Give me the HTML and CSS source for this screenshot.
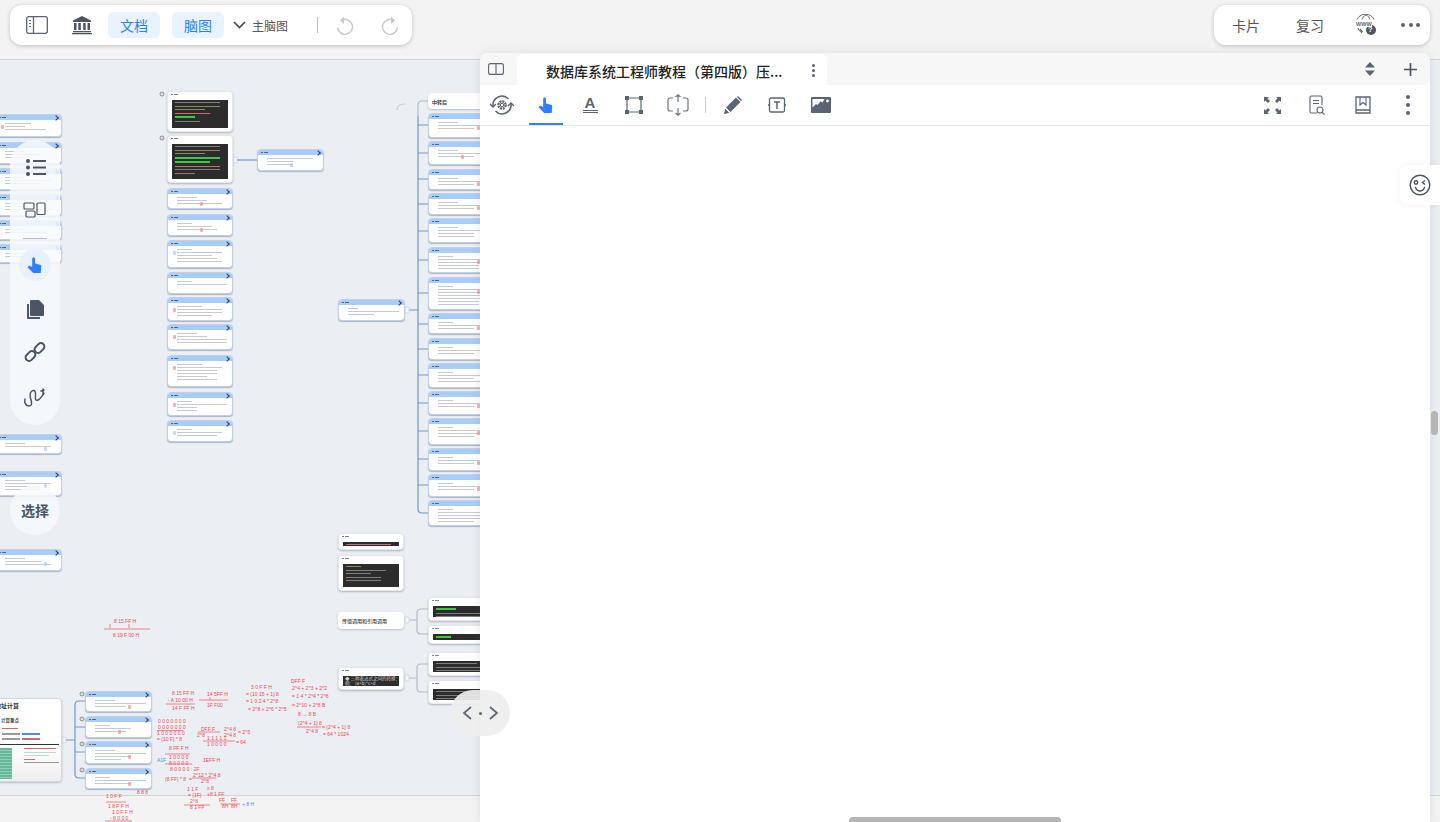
FILE: index.html
```html
<!DOCTYPE html>
<html lang="zh-CN">
<head>
<meta charset="utf-8">
<title>脑图</title>
<link rel="stylesheet" href="styles.css">
</head>
<body>
<main class="stage">

<section class="canvas">
  <div class="sheet"></div>

  <svg class="wires" viewBox="0 0 1440 822" aria-hidden="true">
    <g class="wire-blue">
      <path d="M233 160H257"/>
      <path d="M405 310H418M418 116V509Q418 513 422 513H428"/>
      <path d="M418 125H428M418 153H428M418 179H428M418 204H428M418 231H428M418 260H428M418 293H428M418 324H428M418 349H428M418 375H428M418 403H428M418 431H428M418 459H428M418 485H428"/>
      <path d="M62 740H75M85 701H79Q75 701 75 705V774Q75 778 79 778H85M75 727H85M75 752H85"/>
    </g>
    <g class="wire-grey">
      <path d="M418 116V105Q418 101 422 101H428"/>
      <path d="M405 620H417M428 609H421Q417 609 417 613V630Q417 634 421 634H428"/>
      <path d="M405 678H417M428 664H421Q417 664 417 668V688Q417 692 421 692H428"/>
    </g>
    <path class="wire-arc" d="M397 110Q397 104 405 104"/>
    <g class="knob">
      <rect x="405" y="307" width="4" height="6" rx="1"/>
      <rect x="233" y="157" width="4" height="6" rx="1"/>
      <rect x="62" y="737" width="4" height="6" rx="1"/>
      <rect x="405" y="617" width="4" height="6" rx="1"/>
      <rect x="405" y="675" width="4" height="6" rx="1"/>
    </g>
    <g class="gear">
      <circle cx="162" cy="94" r="2"/><circle cx="162" cy="138" r="2"/>
      <circle cx="82" cy="694" r="2"/><circle cx="82" cy="719" r="2"/><circle cx="82" cy="744" r="2"/><circle cx="82" cy="770" r="2"/>
    </g>
  </svg>

  <!-- left column -->
  <div class="node" style="left:-5px;top:114px;width:67px;height:23px"><span class="ln w50"></span><span class="ln w40"></span><span class="ln w80"></span><i class="mark red m1"></i></div>
  <div class="node" style="left:-5px;top:142px;width:67px;height:22px"><span class="ln w40"></span><span class="ln w70"></span><span class="ln w50"></span></div>
  <div class="node" style="left:-5px;top:168px;width:67px;height:22px"><span class="ln w40"></span><span class="ln w90"></span><span class="ln w70"></span></div>
  <div class="node" style="left:-5px;top:194px;width:67px;height:22px"><span class="ln w40"></span><span class="ln w50"></span><span class="ln w90"></span></div>
  <div class="node" style="left:-5px;top:220px;width:67px;height:20px"><span class="ln w40"></span><span class="ln w80"></span></div>
  <div class="node" style="left:-5px;top:244px;width:67px;height:19px"><span class="ln w50"></span><span class="ln w70"></span></div>
  <div class="node" style="left:-5px;top:434px;width:67px;height:20px"><span class="ln w40"></span><span class="ln w90"></span><i class="mark blue m3"></i></div>
  <div class="node" style="left:-5px;top:471px;width:67px;height:25px"><span class="ln w40"></span><span class="ln w90"></span><span class="ln w70"></span><span class="ln w70"></span><i class="mark blue m3"></i></div>
  <div class="node" style="left:-5px;top:549px;width:67px;height:22px"><span class="ln w40"></span><span class="ln w70"></span><span class="ln w90"></span><i class="mark blue m3"></i></div>

  <!-- second column -->
  <div class="node plain" style="left:167px;top:91px;width:66px;height:41px">
    <div class="shot"><span class="ln c-w w90"></span><span class="ln c-y w90"></span><span class="ln c-y w60"></span><span class="ln c-r w70"></span><span class="ln c-g w40"></span><span class="ln c-w w50"></span></div>
  </div>
  <div class="node plain" style="left:167px;top:135px;width:66px;height:48px">
    <div class="shot"><span class="ln c-w w90"></span><span class="ln c-y w90"></span><span class="ln c-y w60"></span><span class="ln c-g w90"></span><span class="ln c-g w70"></span><span class="ln c-r w90"></span><span class="ln c-w w90"></span><span class="ln c-w w40"></span></div>
  </div>
  <div class="node" style="left:167px;top:188px;width:66px;height:21px"><span class="ln w40"></span><span class="ln w60"></span><span class="ln w90"></span><i class="mark red m2"></i></div>
  <div class="node" style="left:167px;top:214px;width:66px;height:22px"><span class="ln w30"></span><span class="ln w70"></span><span class="ln w80"></span><i class="mark red m2"></i></div>
  <div class="node" style="left:167px;top:240px;width:66px;height:28px"><span class="ln w30"></span><span class="ln w90"></span><span class="ln w70"></span><span class="ln w80"></span><span class="ln w90"></span><i class="mark blue m1"></i></div>
  <div class="node" style="left:167px;top:272px;width:66px;height:22px"><span class="ln w30"></span><span class="ln w100"></span></div>
  <div class="node" style="left:167px;top:297px;width:66px;height:24px"><span class="ln w50"></span><span class="ln w90"></span><span class="ln w90"></span><span class="ln w70"></span><i class="mark red m1"></i></div>
  <div class="node" style="left:167px;top:324px;width:66px;height:26px"><span class="ln w40"></span><span class="ln w60"></span><span class="ln w100"></span><span class="ln w100"></span><i class="mark red m1"></i></div>
  <div class="node" style="left:167px;top:355px;width:66px;height:32px"><span class="ln w50"></span><span class="ln w90"></span><span class="ln w80"></span><span class="ln w80"></span><span class="ln w60"></span><span class="ln w80"></span><i class="mark red m1"></i></div>
  <div class="node" style="left:167px;top:392px;width:66px;height:24px"><span class="ln w30"></span><span class="ln w100"></span><span class="ln w40"></span><span class="ln w40"></span><i class="mark red m1"></i></div>
  <div class="node" style="left:167px;top:420px;width:66px;height:22px"><span class="ln w30"></span><span class="ln w90"></span><span class="ln w80"></span><i class="mark blue m1"></i></div>

  <!-- third column -->
  <div class="node" style="left:257px;top:149px;width:67px;height:22px"><span class="ln w90"></span><span class="ln w50"></span><span class="ln w50"></span><i class="mark blue m2"></i></div>
  <div class="node" style="left:338px;top:299px;width:67px;height:22px"><span class="ln w20"></span><span class="ln w100"></span><span class="ln w50"></span></div>
  <div class="node plain" style="left:338px;top:533px;width:66px;height:17px"><div class="shot"><span class="ln c-r w90"></span></div></div>
  <div class="node plain" style="left:338px;top:555px;width:66px;height:36px"><div class="shot"><span class="ln c-y w30"></span><span class="ln c-w w80"></span><span class="ln c-w w50"></span><span class="ln c-w w70"></span><span class="ln c-w w70"></span></div></div>
  <div class="title-node" style="left:338px;top:612px;width:66px;height:17px">传值调用和引用调用</div>
  <div class="node plain" style="left:338px;top:667px;width:66px;height:23px"><div class="shot shot-text">◆ 三种表达式之间的转换：<br>例： (a+b)*c+d</div></div>

  <!-- right trunk -->
  <div class="title-node strong" style="left:428px;top:93px;width:67px;height:16px">中转后</div>
  <div class="node" style="left:428px;top:113px;width:67px;height:25px"><span class="ln w40"></span><span class="ln w90"></span><span class="ln w70"></span><i class="mark red m3"></i></div>
  <div class="node" style="left:428px;top:141px;width:67px;height:24px"><span class="ln w40"></span><span class="ln w90"></span><span class="ln w70"></span><i class="mark red m2"></i></div>
  <div class="node" style="left:428px;top:169px;width:67px;height:21px"><span class="ln w40"></span><span class="ln w90"></span><span class="ln w70"></span><i class="mark red m3"></i></div>
  <div class="node" style="left:428px;top:193px;width:67px;height:22px"><span class="ln w40"></span><span class="ln w90"></span><span class="ln w70"></span><i class="mark red m3"></i></div>
  <div class="node" style="left:428px;top:218px;width:67px;height:25px"><span class="ln w40"></span><span class="ln w90"></span><span class="ln w70"></span><span class="ln w70"></span></div>
  <div class="node" style="left:428px;top:247px;width:67px;height:26px"><span class="ln w30"></span><span class="ln w100"></span><span class="ln w80"></span><span class="ln w80"></span><span class="ln w80"></span><i class="mark red m3"></i></div>
  <div class="node" style="left:428px;top:277px;width:67px;height:33px"><span class="ln w30"></span><span class="ln w90"></span><span class="ln w100"></span><span class="ln w90"></span><span class="ln w90"></span><span class="ln w80"></span><span class="ln w80"></span><i class="mark red m3"></i></div>
  <div class="node" style="left:428px;top:313px;width:67px;height:21px"><span class="ln w30"></span><span class="ln w100"></span><span class="ln w70"></span><i class="mark red m3"></i></div>
  <div class="node" style="left:428px;top:338px;width:67px;height:22px"><span class="ln w30"></span><span class="ln w100"></span><span class="ln w70"></span></div>
  <div class="node" style="left:428px;top:363px;width:67px;height:25px"><span class="ln w30"></span><span class="ln w100"></span><span class="ln w70"></span><span class="ln w90"></span></div>
  <div class="node" style="left:428px;top:391px;width:67px;height:24px"><span class="ln w30"></span><span class="ln w100"></span><span class="ln w70"></span><i class="mark red m3"></i></div>
  <div class="node" style="left:428px;top:418px;width:67px;height:27px"><span class="ln w30"></span><span class="ln w100"></span><span class="ln w90"></span><span class="ln w70"></span><i class="mark red m3"></i></div>
  <div class="node" style="left:428px;top:448px;width:67px;height:23px"><span class="ln w30"></span><span class="ln w100"></span><span class="ln w70"></span><i class="mark red m3"></i></div>
  <div class="node" style="left:428px;top:474px;width:67px;height:23px"><span class="ln w30"></span><span class="ln w100"></span><span class="ln w70"></span><i class="mark red m3"></i></div>
  <div class="node" style="left:428px;top:500px;width:67px;height:26px"><span class="ln w30"></span><span class="ln w100"></span><span class="ln w90"></span><span class="ln w90"></span><span class="ln w70"></span></div>

  <div class="node plain" style="left:428px;top:597px;width:67px;height:24px"><div class="shot"><span class="ln c-g w40"></span><span class="ln c-w w100"></span><span class="ln c-w w100"></span></div></div>
  <div class="node plain" style="left:428px;top:625px;width:67px;height:19px"><div class="shot"><span class="ln c-g w30"></span><span class="ln c-w w100"></span></div></div>
  <div class="node plain" style="left:428px;top:652px;width:67px;height:24px"><div class="shot"><span class="ln c-w w80"></span><span class="ln c-w w100"></span><span class="ln c-w w100"></span></div></div>
  <div class="node plain" style="left:428px;top:680px;width:67px;height:24px"><div class="shot"><span class="ln c-w w80"></span><span class="ln c-w w100"></span><span class="ln c-w w100"></span></div></div>

  <!-- bottom-left group -->
  <div class="big-node">
    <h2 class="big-title">地址计算</h2>
    <h3 class="big-sub">计算重点</h3>
    <div class="big-row"><span class="ln c-r seg-a"></span></div>
    <div class="big-row"><span class="ln c-n seg-b"></span><span class="ln c-b seg-c"></span></div>
    <div class="big-row"><span class="ln c-n seg-b"></span><span class="ln c-r seg-c"></span></div>
    <span class="ln c-k w100"></span>
    <div class="big-figure">
      <div class="table"></div>
      <div class="notes"><span class="ln c-r w90"></span><span class="ln c-l w90"></span><span class="ln c-l w70"></span><span class="ln c-r w30"></span><span class="ln c-n w100"></span></div>
    </div>
  </div>
  <div class="node" style="left:85px;top:691px;width:67px;height:21px"><span class="ln w40"></span><span class="ln w100"></span><span class="ln w60"></span><i class="mark red m4"></i></div>
  <div class="node" style="left:85px;top:716px;width:67px;height:22px"><span class="ln w30"></span><span class="ln w70"></span><span class="ln w60"></span><i class="mark red m2"></i></div>
  <div class="node" style="left:85px;top:741px;width:67px;height:23px"><span class="ln w40"></span><span class="ln w100"></span><span class="ln w70"></span><span class="ln w50"></span><i class="mark red m4"></i></div>
  <div class="node" style="left:85px;top:768px;width:67px;height:21px"><span class="ln w30"></span><span class="ln w100"></span><span class="ln w70"></span><i class="mark red m4"></i></div>

  <svg class="ink" viewBox="0 0 1440 822" aria-hidden="true">
    <g class="ink-lines">
      <path d="M104 629H150M110 624V628M129 624V628"/>
      <path d="M166 704H195M199 700H228M210 697V700"/>
      <path d="M157 730.500H183M198 732H220M203 741H235M165 754H190M165 764H192"/>
      <path d="M192 778H216M297 727H321M184 805H210M106 802H126M105 821H132"/>
      <path d="M220 804H240"/>
    </g>
    <g class="ink-text">
      <text x="114" y="623">8 15 FF H</text>
      <text x="113" y="637">8 19 F 00 H</text>
      <text x="172" y="695">8 15 FF H</text>
      <text x="168" y="702">- A 10 00 H</text>
      <text x="172" y="710">14 F FF H</text>
      <text x="207" y="696">14 5FF H</text>
      <text x="207" y="707">1F F00</text>
      <text x="251" y="689">3 0 F F H</text>
      <text x="246" y="696">= (10 15 + 1) 8</text>
      <text x="246" y="703">= 1 0 2 4 * 2^8</text>
      <text x="248" y="711">= 2^8 + 2^6 * 2^5</text>
      <text x="291" y="683">DFF F</text>
      <text x="292" y="690">2^4 + 2^3 + 2^2</text>
      <text x="292" y="698">= 1 4 * 2^4 * 2^8</text>
      <text x="292" y="707">= 2^10 + 2^8 B</text>
      <text x="298" y="716">8 → 8 B</text>
      <text x="298" y="725">(2^4 + 1) 8</text>
      <text x="306" y="733">2^4 8</text>
      <text x="322" y="729">= (2^4 + 1) 8</text>
      <text x="323" y="736">= 64 * 1024</text>
      <text x="158" y="723">0 0 0 0 0 0 0</text>
      <text x="158" y="729">0 0 0 0 0 0 0</text>
      <text x="157" y="735">1 0 0 0 0 0 0</text>
      <text x="157" y="741">= (10 F) * 8</text>
      <text x="169" y="750">8 FF F H</text>
      <text x="169" y="759">1 0 0 0 0</text>
      <text x="169" y="765">8 0 0 0 0</text>
      <text x="170" y="771">8 0 0 0 0 : 2F</text>
      <text x="201" y="731">DFF F</text>
      <text x="197" y="737">2^8</text>
      <text x="224" y="731">2^4 8</text>
      <text x="224" y="737">2^4 8</text>
      <text x="238" y="734">= 2^5</text>
      <text x="207" y="740">1 1 1 1 1</text>
      <text x="207" y="746">1 0 0 0 0</text>
      <text x="236" y="744">= 64</text>
      <text x="203" y="762">1EFF H</text>
      <text x="165" y="781">(8 FF) * 8</text>
      <text x="189" y="781">=</text>
      <text x="193" y="777">2^12 * 2^4 8</text>
      <text x="201" y="783">2^8</text>
      <text x="187" y="791">1 1 F</text>
      <text x="188" y="797">= (1F)</text>
      <text x="207" y="790">x 8</text>
      <text x="207" y="796">+8 1 FF</text>
      <text x="190" y="803">2^8</text>
      <text x="190" y="809">8 1 FF</text>
      <text x="219" y="802">FF</text>
      <text x="231" y="802">FF</text>
      <text x="222" y="808">8H</text>
      <text x="231" y="808">8H</text>
      <text x="137" y="794">8 8 8</text>
      <text x="106" y="798">1 0 F F</text>
      <text x="108" y="808">1 8 F F H</text>
      <text x="112" y="814">1 0 F F H</text>
      <text x="110" y="820">- 8 0 0 0</text>
      <text class="ink-blue" x="157" y="762">A1F</text>
      <text class="ink-blue" x="242" y="806">+ 8 H</text>
    </g>
  </svg>
</section>

<!-- floating tool rail -->
<aside class="rail">
  <button class="rail-btn"><svg viewBox="0 0 24 24" width="24" height="24"><g fill="#4b5563"><circle cx="5" cy="6" r="2"/><circle cx="5" cy="12.5" r="2"/><circle cx="5" cy="19" r="2"/><rect x="10" y="5" width="13" height="2"/><rect x="10" y="11.500" width="13" height="2"/><rect x="10" y="18" width="13" height="2"/></g></svg></button>
  <button class="rail-btn"><svg viewBox="0 0 24 24" width="24" height="24" fill="none" stroke="#4b5563" stroke-width="1.2"><rect x="1" y="4" width="10" height="6" rx="1"/><rect x="3" y="12" width="9" height="6" rx="1"/><rect x="14" y="4" width="8" height="11.500" rx="1"/></svg></button>
  <div class="rail-rule"></div>
  <button class="rail-btn on"><svg viewBox="0 0 20 20" width="19" height="19"><path fill="#2f80ff" d="M8 1.500c.9 0 1.500.6 1.500 1.500v5l5.200 1.200c.9.2 1.500 1 1.400 2l-.6 6.800H7.500L1.600 11.800l1-1c.5-.5 1.300-.6 1.900-.2l2 1.300V3c0-.9.6-1.500 1.500-1.500z"/></svg></button>
  <button class="rail-btn"><svg viewBox="0 0 24 24" width="24" height="24"><path fill="#4b5563" d="M8 3h8l5 5v10a1 1 0 0 1-1 1H8a1 1 0 0 1-1-1V4a1 1 0 0 1 1-1zM4 7h2v13h11v2H5a1 1 0 0 1-1-1z"/></svg></button>
  <button class="rail-btn"><svg viewBox="0 0 24 24" width="24" height="24" fill="none" stroke="#4b5563" stroke-width="2"><rect x="2" y="12.500" width="11" height="7" rx="3.500" transform="rotate(-45 7.500 16)"/><rect x="11" y="4.500" width="11" height="7" rx="3.500" transform="rotate(-45 16.500 8)"/></svg></button>
  <button class="rail-btn"><svg viewBox="0 0 24 24" width="24" height="24" fill="none" stroke="#4b5563" stroke-width="1.500" stroke-linecap="round"><path d="M2 15c-1 4 1 7 4 7s3-3 2-6-2-7 1-9 4 2 3.500 5 0 5 2.500 4 4-4 6-7"/><path d="M20 5v5M18 7l3-1"/></svg></button>
</aside>
<button class="rail-select">选择</button>

<!-- top-left toolbar -->
<header class="bar bar-left">
  <svg class="ic i-side" viewBox="0 0 22 18" width="22" height="18" fill="none" stroke="#5b6472" stroke-width="1.300"><rect x=".7" y=".7" width="20.600" height="16.600" rx="2"/><path d="M7.500 1v16"/><path d="M3 4.500h2M3 7.500h2M3 10.500h2" stroke-width="1.100"/></svg>
  <svg class="ic i-bank" viewBox="0 0 20 20" width="20" height="20" fill="#4b5563"><path d="M10 1 1 5.500V7h18V5.500z"/><rect x="2" y="8" width="2.500" height="7"/><rect x="6.300" y="8" width="2.500" height="7"/><rect x="11.200" y="8" width="2.500" height="7"/><rect x="15.500" y="8" width="2.500" height="7"/><rect x="1" y="16" width="18" height="1.300"/><rect x="0" y="18" width="20" height="1.300"/></svg>
  <a class="pill p-doc">文档</a>
  <a class="pill p-map">脑图</a>
  <svg class="ic i-chev" viewBox="0 0 13 8" width="13" height="8" fill="none" stroke="#3d4654" stroke-width="1.600"><path d="M1 1l5.500 5.500L12 1"/></svg>
  <span class="map-name">主脑图</span>
  <i class="bar-sep"></i>
  <svg class="ic i-undo" viewBox="0 0 18 20" width="18" height="20" fill="none" stroke="#c6c8cb" stroke-width="1.500"><path d="M5 5.500a7.500 7.500 0 1 1-3.500 7"/><path d="M8 1.500 4 5.500l4 3.500" fill="#c6c8cb" stroke="none"/></svg>
  <svg class="ic i-redo" viewBox="0 0 18 20" width="18" height="20" fill="none" stroke="#c6c8cb" stroke-width="1.500"><path d="M13 5.500a7.500 7.500 0 1 0 3.500 7"/><path d="M10 1.500l4 4-4 3.500" fill="#c6c8cb" stroke="none"/></svg>
</header>

<!-- top-right toolbar -->
<header class="bar bar-right">
  <a class="bar-link">卡片</a>
  <a class="bar-link">复习</a>
  <span class="www">
    <svg viewBox="0 0 22 22" width="22" height="22" fill="none" stroke="#5b6472" stroke-width="1"><path d="M2 5.500A9.500 9.500 0 0 1 19 5.500M11 .8c-2 1-3.500 3-4 4.700M11 .8c2 1 3.500 3 4 4.700M3 14a9.500 9.500 0 0 0 4 5"/><path d="m5 15 2.500 3" stroke-width="1.400"/><circle cx="16" cy="16" r="5" fill="#4b5563" stroke="none"/></svg>
    <b class="www-w">WWW</b><b class="www-q">?</b>
  </span>
  <span class="dots"><i></i><i></i><i></i></span>
</header>

<!-- reader window -->
<section class="reader">
  <div class="tabs">
    <span class="tabs-side"><svg viewBox="0 0 16 12" width="16" height="12" fill="none" stroke="#5b6472" stroke-width="1.100"><rect x=".6" y=".6" width="14.800" height="10.800" rx="2"/><path d="M8 1v10"/></svg></span>
    <div class="tab">
      <span class="tab-title">数据库系统工程师教程（第四版）压...</span>
      <span class="kebab small"><i></i><i></i><i></i></span>
    </div>
    <svg class="ic i-sort" viewBox="0 0 10 14" width="10" height="14" fill="#5b6472"><path d="M5 0l5 5.500H0zM5 14 0 8.500h10z"/></svg>
    <svg class="ic i-plus" viewBox="0 0 13 13" width="13" height="13" stroke="#4b5563" stroke-width="1.700"><path d="M6.500 0v13M0 6.500h13"/></svg>
  </div>
  <div class="tools">
    <span class="tool"><svg viewBox="0 0 24 24" width="24" height="24" fill="none" stroke="#5b6472" stroke-width="1.500"><path d="M3 13a9 9 0 0 1 15.500-7M21 11a9 9 0 0 1-15.500 7"/><path d="M0 11l3 3 3-3M18 13l3-3 3 3" stroke-width="1.400"/><circle cx="12" cy="12" r="3.600" stroke-width="2.400" stroke-dasharray="2 .8"/><circle cx="12" cy="12" r="1.700" stroke-width="1"/></svg></span>
    <span class="tool active"><svg viewBox="0 0 20 20" width="19" height="19"><path fill="#2f80ff" d="M8 1.500c.9 0 1.500.6 1.500 1.500v5l5.200 1.200c.9.2 1.500 1 1.400 2l-.6 6.800H7.500L1.600 11.800l1-1c.5-.5 1.300-.6 1.900-.2l2 1.300V3c0-.9.6-1.500 1.500-1.500z"/></svg></span>
    <span class="tool tool-a"><b>A</b><i></i><i></i></span>
    <span class="tool"><svg viewBox="0 0 18 18" width="18" height="18" fill="none" stroke="#5b6472" stroke-width="1.200"><path d="M2 2h14v14H2z"/><g fill="#5b6472" stroke="none"><rect width="4" height="4"/><rect x="14" width="4" height="4"/><rect y="14" width="4" height="4"/><rect x="14" y="14" width="4" height="4"/></g></svg></span>
    <span class="tool"><svg viewBox="0 0 22 22" width="22" height="22" fill="none" stroke="#6d7480" stroke-width="1.200"><path d="M6 4H3a2 2 0 0 0-2 2v9a2 2 0 0 0 2 2h3M16 4h3a2 2 0 0 1 2 2v9a2 2 0 0 1-2 2h-3M11 1v7M8.500 3 11 .8 13.500 3M11 14v7M8.500 19l2.500 2.200 2.500-2.200"/></svg></span>
    <i class="tool-sep"></i>
    <span class="tool"><svg viewBox="0 0 20 20" width="20" height="20" fill="#5b6472"><path d="M13 2.500 17.500 7 7.500 17l-4.500-4.500zM15 1l4 4-1 1-4-4zM2.300 13.800l3.900 3.900-3.200 1L1 19z"/></svg></span>
    <span class="tool"><svg viewBox="0 0 20 20" width="20" height="20" fill="none" stroke="#5b6472" stroke-width="1.300"><rect x="2.500" y="3" width="15" height="14" rx="1.500"/><path d="M7 7h6M10 7v7" stroke-width="1.500"/><path d="M1 10h2M17 10h2"/></svg></span>
    <span class="tool"><svg viewBox="0 0 20 16" width="20" height="16"><rect width="20" height="16" rx="1" fill="#5b6472"/><path fill="#fff" d="M1.500 2h12l-2 3.500-2-1.200-3 3.700-1.500-1-3.500 3.500z"/><circle cx="16.500" cy="4" r="1.400" fill="#fff"/></svg></span>
    <span class="tools-right">
      <span class="tool"><svg viewBox="0 0 17 17" width="17" height="17" fill="#5b6472"><path d="M0 0h5L3.500 1.500 6 4 4 6 1.500 3.500 0 5zM17 0v5l-1.500-1.500L13 6l-2-2 2.500-2.500L12 0zM0 17v-5l1.500 1.500L4 11l2 2-2.500 2.500L5 17zM17 17h-5l1.500-1.500L11 13l2-2 2.500 2.500L17 12z"/></svg></span>
      <span class="tool"><svg viewBox="0 0 17 20" width="17" height="20" fill="none" stroke="#5b6472" stroke-width="1.100"><path d="M8 18H2.500a1.500 1.500 0 0 1-1.500-1.500v-14A1.500 1.500 0 0 1 2.500 1h9A1.500 1.500 0 0 1 13 2.500V10"/><path d="M4 5.500h6M4 8.500h6"/><circle cx="11" cy="15" r="3"/><path d="m13 17.500 2.500 2"/></svg></span>
      <span class="tool"><svg viewBox="0 0 16 18" width="16" height="18" fill="none" stroke="#5b6472" stroke-width="1.300"><path d="M1 1h14v16H1zM1 14h14"/><path d="M5 1v8l3-2.500L11 9V1" stroke-width="1.100"/></svg></span>
      <span class="tool"><span class="kebab"><i></i><i></i><i></i></span></span>
    </span>
  </div>
  <div class="page"></div>
</section>

<button class="face"><svg viewBox="0 0 22 22" width="22" height="22" fill="none" stroke="#4b5563" stroke-width="1.400"><circle cx="11" cy="11" r="9.800"/><circle cx="7" cy="8.500" r="1.700"/><path d="m16 6.500-2.500 2 2.500 2"/><path d="M6.500 13.500c1 2.600 3 3.500 4.500 3.500s3.500-.9 4.500-3.500" stroke-linecap="round"/></svg></button>

<button class="pager">
  <svg viewBox="0 0 10 14" width="10" height="14" fill="none" stroke="#5b6472" stroke-width="1.700"><path d="M9 1 2 7l7 6"/></svg>
  <i class="pager-dot"></i>
  <svg viewBox="0 0 10 14" width="10" height="14" fill="none" stroke="#5b6472" stroke-width="1.700"><path d="m1 1 7 6-7 6"/></svg>
</button>

<i class="scroll-v"></i>
<i class="scroll-h"></i>
</main>
</body>
</html>
```

FILE: styles.css
```css
* { box-sizing: border-box; }
html, body { margin: 0; height: 100%; }
body {
  font-family: "Noto Sans CJK SC", "Noto Sans", "Liberation Sans", sans-serif;
  background: #f3f3f3;
  color: #333;
  overflow: hidden;
}
button { border: 0; padding: 0; font: inherit; background: none; color: inherit; }
.stage { position: relative; width: 1440px; height: 822px; overflow: hidden; }

/* free mind-map canvas */
.canvas { position: absolute; inset: 0; overflow: hidden; }
.sheet {
  position: absolute; left: 0; right: 0; top: 59px; height: 737px;
  background: #ebeef3;
  border-top: 1px solid #d2d4d8;
  border-bottom: 1px solid #d2d4d8;
}
.wires, .ink { position: absolute; left: 0; top: 0; width: 1440px; height: 822px; }
.wires { fill: none; }
.wire-blue path { stroke: #7199cc; stroke-width: 1.200; }
.wire-grey path { stroke: #b4bbc5; stroke-width: 1.200; }
.wire-arc { stroke: #b6cdee; stroke-width: 1; }
.knob rect { fill: #f3f5f8; stroke: #c6ccd4; stroke-width: .6; }
.gear circle { fill: #d9dce1; stroke: #8d929a; stroke-width: 1; }

.ink-lines path { fill: none; stroke: #f0646c; stroke-width: .8; }
.ink-text text { font: 5px "Liberation Sans", sans-serif; fill: #ee4a52; }
.ink-text .ink-blue { fill: #4a8cf0; }

.node {
  position: absolute;
  display: flex; flex-direction: column; gap: 2px;
  padding: 8px 5px 2px 9px;
  background: #fff;
  border: 1px solid #c3cfe2;
  border-radius: 4px;
  box-shadow: 0 1px 1px rgba(100, 125, 165, .5);
  overflow: hidden;
}
.node::before {
  content: "";
  position: absolute; left: 0; right: 0; top: 0; height: 5px;
  background:
    radial-gradient(circle, #55657c .5px, transparent .8px) 3px 0 / 2px 5px no-repeat,
    radial-gradient(circle, #55657c .5px, transparent .8px) 5.500px 0 / 2px 5px no-repeat,
    radial-gradient(circle, #55657c .5px, transparent .8px) 8px 0 / 2px 5px no-repeat,
    #a9cdfb;
}
.node::after {
  content: "";
  position: absolute; right: 3px; top: 1px;
  width: 3px; height: 3px;
  border-top: 1.200px solid #2b3f5c; border-right: 1.200px solid #2b3f5c;
  transform: rotate(45deg);
}
.node.plain { padding: 8px 4px 3px; border-color: #e4e7ec; box-shadow: 0 1px 2px rgba(100, 110, 130, .45); }
.node.plain::before {
  background:
    radial-gradient(circle, #7b838f .5px, transparent .8px) 3px 0 / 2px 5px no-repeat,
    radial-gradient(circle, #7b838f .5px, transparent .8px) 5.500px 0 / 2px 5px no-repeat,
    radial-gradient(circle, #7b838f .5px, transparent .8px) 8px 0 / 2px 5px no-repeat,
    #fff;
}
.node.plain::after { display: none; }

.ln { display: block; flex: none; height: 1px; background: #c6c9cf; }
.w20 { width: 20%; } .w30 { width: 30%; } .w40 { width: 40%; } .w50 { width: 50%; }
.w60 { width: 60%; } .w70 { width: 70%; } .w80 { width: 80%; } .w90 { width: 90%; } .w100 { width: 100%; }
.c-w { background: #7f7f7f; } .c-y { background: #8d8a5f; } .c-g { background: #37c947; height: 2px; }
.c-r { background: #cf6a6a; } .c-k { background: #333; } .c-l { background: #c3d8ca; }
.c-n { background: #9a9a9a; } .c-b { background: #4a8cf0; }

.mark { position: absolute; width: 3px; height: 4px; border-radius: 1px; opacity: .7; }
.mark.red { background: #f28d92; }
.mark.blue { background: #a8c9f5; }
.m1 { left: 5px; top: 10px; }
.m2 { left: 32px; top: 13px; }
.m3 { left: 48px; top: 12px; }
.m4 { left: 42px; top: 13px; }

.shot {
  flex: 1;
  display: flex; flex-direction: column; gap: 2.500px;
  padding: 2px 3px;
  background: #2c2c2c;
  overflow: hidden;
}
.shot-text { display: block; padding: 0 2px; font-size: 4.500px; line-height: 5px; color: #d4d4d4; white-space: nowrap; }

.title-node {
  position: absolute;
  display: flex; align-items: center;
  padding-left: 4px;
  background: #fff;
  border-radius: 4px;
  box-shadow: 0 1px 2px rgba(110, 120, 140, .4);
  font-size: 5px; font-weight: 500; color: #444;
  white-space: nowrap; overflow: hidden;
}
.title-node.strong { font-weight: 700; color: #333; }

.big-node {
  position: absolute; left: -10px; top: 698px; width: 72px; height: 84px;
  display: flex; flex-direction: column; gap: 3.500px;
  padding: 2px 2px 2px 4px;
  background: linear-gradient(#fff 60%, #eeeeee 100%);
  border: 1px solid #d3d6db;
  border-radius: 4px;
  overflow: hidden;
  box-shadow: 0 1px 2px rgba(110, 120, 140, .4);
}
.big-title { margin: 0; font-size: 6px; line-height: 9px; font-weight: 700; color: #333; }
.big-sub { margin: 3px 0 2px 6px; font-size: 4.500px; line-height: 6px; font-weight: 700; color: #444; }
.big-row { display: flex; gap: 2px; margin-left: 7px; flex: none; }
.seg-a { width: 16px; }
.seg-b { width: 18px; height: 2px; }
.seg-c { width: 18px; height: 2px; }
.big-figure { display: flex; gap: 12px; flex: 1; }
.table { width: 17px; background: repeating-linear-gradient(#67b89a 0 2px, #8fd0b8 2px 3px); }
.notes { flex: 1; display: flex; flex-direction: column; gap: 2.500px; }

/* floating rail */
.rail {
  position: absolute; left: 10px; top: 140px; width: 50px; height: 285px;
  display: flex; flex-direction: column; align-items: center;
  padding-top: 11px;
  border-radius: 25px;
  background: rgba(247, 249, 252, .86);
}
.rail-btn { width: 32px; height: 32px; display: flex; align-items: center; justify-content: center; flex: none; margin-bottom: 11.500px; }
.rail-rule { width: 24px; height: 1px; background: #b8bcc3; margin-bottom: 10px; flex: none; }
.rail-btn.on { border-radius: 50%; background: #e9f1fd; }
.rail-select {
  position: absolute; left: 10px; top: 485px; width: 50px; height: 50px;
  border-radius: 50%;
  background: rgba(247, 249, 252, .86);
  font-size: 14px; font-weight: 700; color: #4b5563;
}

/* top bars */
.bar {
  position: absolute; top: 5px; height: 40px;
  display: flex; align-items: center;
  background: #fff;
  border-radius: 12px;
  box-shadow: 0 1px 4px rgba(0, 0, 0, .22);
}
.bar-left { left: 10px; width: 402px; padding-left: 16px; }
.bar-right { left: 1214px; width: 216px; padding-left: 18px; }
.ic { flex: none; display: block; }
.i-bank { margin-left: 24px; }
.pill {
  width: 52px; height: 26px;
  display: flex; align-items: center; justify-content: center;
  border-radius: 6px;
  background: #e8f3ff;
  font-size: 14px; color: #2f80ed;
}
.p-doc { margin-left: 16px; }
.p-map { margin-left: 12px; }
.i-chev { margin-left: 9px; }
.map-name { margin-left: 6px; font-size: 12px; color: #555; white-space: nowrap; }
.bar-sep { width: 1px; height: 16px; margin-left: 29px; background: #b8bcc2; }
.i-undo { margin-left: 18px; }
.i-redo { margin-left: 27px; }

.bar-link { font-size: 14px; color: #555; width: 28px; white-space: nowrap; }
.bar-link + .bar-link { margin-left: 36px; }
.www { position: relative; width: 22px; height: 22px; margin-left: 31px; flex: none; }
.www-w {
  position: absolute; left: 1px; top: 7px;
  font: 700 5.500px/6px "Liberation Sans", sans-serif; color: #5b6472;
  background: #fff;
}
.www-q { position: absolute; left: 13px; top: 12px; font: 700 7.500px/8px "Liberation Sans", sans-serif; color: #fff; }
.dots { display: flex; gap: 3.500px; margin-left: 24px; }
.dots i { width: 4px; height: 4px; border-radius: 50%; background: #5b6472; }

/* reader window */
.reader {
  position: absolute; left: 480px; top: 53px; width: 950px; height: 769px;
  display: flex; flex-direction: column;
  background: #fff;
  border-radius: 8px 8px 0 0;
  box-shadow: 0 0 10px rgba(60, 70, 90, .12);
}
.tabs {
  height: 32px; flex: none;
  display: flex; align-items: center;
  background: #f7f7f8;
  border-radius: 8px 8px 8px 0;
}
.tabs-side { width: 37px; padding-left: 8px; display: flex; flex: none; }
.tab {
  width: 310px; height: 31px; margin-top: 1px; flex: none;
  display: flex; align-items: center;
  padding: 2px 0 0 29px;
  background: #fff;
  border-radius: 6px 6px 0 0;
}
.tab-title { width: 242px; font-size: 14px; font-weight: 500; color: #222; white-space: nowrap; overflow: hidden; }
.kebab { display: flex; flex-direction: column; gap: 4px; flex: none; }
.kebab i { width: 4px; height: 4px; border-radius: 50%; background: #5b6472; }
.kebab.small { gap: 2px; margin-left: 24px; }
.kebab.small i { width: 3px; height: 3px; }
.i-sort { margin-left: 538px; }
.i-plus { margin-left: 29px; }
.tools {
  height: 41px; flex: none;
  display: flex; align-items: center;
  border-bottom: 1px solid #e8e9eb;
}
.tool { position: relative; width: 44px; height: 40px; display: flex; align-items: center; justify-content: center; flex: none; }
.tool.active::after {
  content: ""; position: absolute; left: 5px; right: 5px; bottom: 0; height: 2px;
  background: #2f80ff;
}
.tool-sep { width: 1px; height: 16px; margin: 0 5px 0 4.500px; background: #c9ccd1; flex: none; }
.tool-a { flex-direction: column; gap: 1px; }
.tool-a b { font: 700 15px/12px "Liberation Sans", sans-serif; color: #5b6472; }
.tool-a i { width: 15px; height: 1.200px; background: #5b6472; }
.tools-right { margin-left: auto; display: flex; }
.tools-right .tool { width: 45px; }
.page { flex: 1; background: #fff; }

.face {
  position: absolute; left: 1400px; top: 165px; width: 40px; height: 40px;
  display: flex; align-items: center; justify-content: center;
  background: #fff;
  border-radius: 8px 0 0 8px;
  box-shadow: 0 0 6px rgba(0, 0, 0, .06);
}
.pager {
  position: absolute; left: 450px; top: 690px; width: 60px; height: 46px;
  display: flex; align-items: center; justify-content: center; gap: 7px;
  border-radius: 23px;
  background: rgba(238, 238, 238, .92);
}
.pager-dot { width: 3px; height: 3px; border-radius: 50%; background: #5b6472; }
.scroll-v { position: absolute; left: 1431px; top: 411px; width: 7px; height: 24px; border-radius: 4px; background: #b5b5b5; }
.scroll-h { position: absolute; left: 849px; top: 817px; width: 212px; height: 5px; border-radius: 4px 4px 0 0; background: #b5b5b5; }
```
